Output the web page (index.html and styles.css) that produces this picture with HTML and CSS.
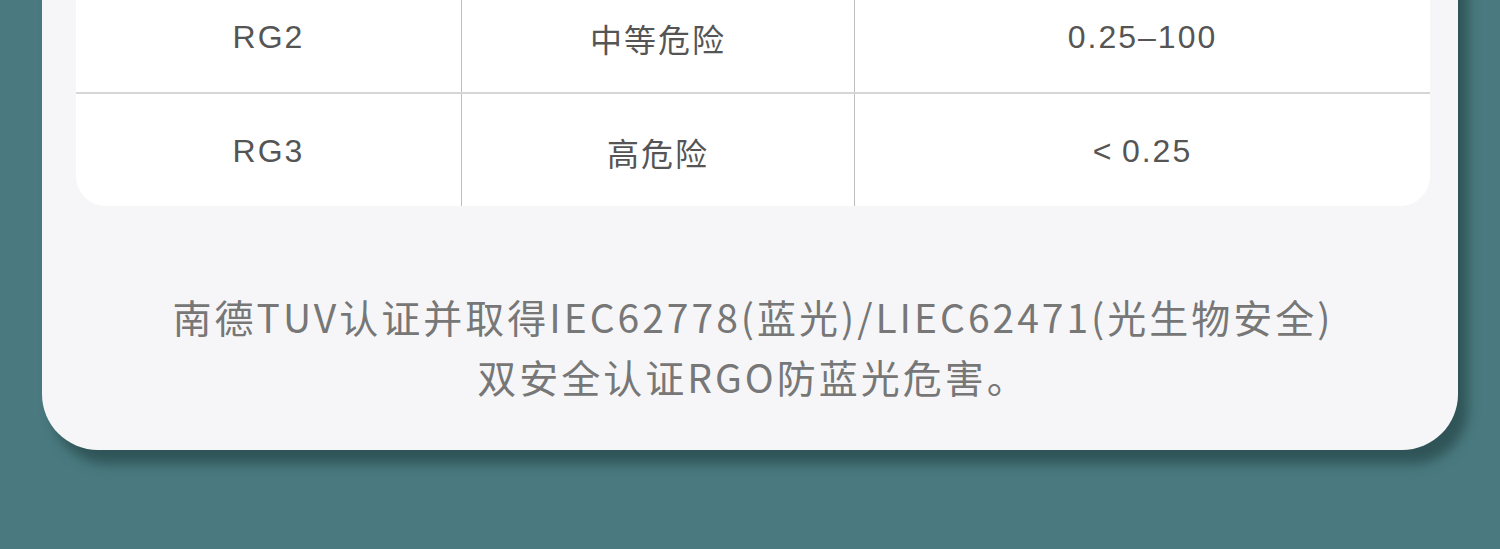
FILE: index.html
```html
<!DOCTYPE html>
<html lang="zh-CN">
<head>
  <meta charset="UTF-8" />
  <meta name="viewport" content="width=device-width, initial-scale=1.0" />
  <title>RG 危险等级</title>
  <link rel="stylesheet" href="styles.css">
</head>
<body>
  <div class="page">
    <div class="card">
      <table class="risk-table">
        <tbody>
          <tr>
            <td>RG2</td>
            <td>中等危险</td>
            <td>0.25–100</td>
          </tr>
          <tr>
            <td>RG3</td>
            <td>高危险</td>
            <td>&lt;&thinsp;0.25</td>
          </tr>
        </tbody>
      </table>

      <p class="note">
        南德TUV认证并取得IEC62778(蓝光)/LIEC62471(光生物安全)<br>
        双安全认证RGO防蓝光危害。
      </p>
    </div>
  </div>
</body>
</html>
```

FILE: styles.css
```css
html, body {
  margin: 0;
  padding: 0;
}

body {
  background: #4a7a7f;
  font-family: 'Liberation Sans', 'Noto Sans CJK SC', sans-serif;
  height: 549px;
  overflow: hidden;
}

.page {
  padding: 0 42px;
}

.card {
  margin-top: -60px;
  padding: 40px 28px 44px 34px;
  background: #f6f6f8;
  border-radius: 0 0 56px 56px;
  box-shadow: 10px 14px 12px rgba(30, 60, 62, 0.6);
}

.risk-table {
  width: 100%;
  border-collapse: collapse;
  table-layout: fixed;
  background: #ffffff;
  border-radius: 0 0 30px 30px;
}

.risk-table td {
  height: 109px;
  padding: 3px 0 0;
  text-align: center;
  vertical-align: middle;
  font-size: 32px;
  letter-spacing: 2px;
  color: #555;
  border-left: 1px solid #bdbdbd;
}

.risk-table td:first-child {
  border-left: none;
  width: 385px;
}

.risk-table td:nth-child(2) {
  width: 392px;
}

.risk-table tr + tr td {
  border-top: 2px solid #d6d6d6;
}

.note {
  margin: 80px 0 0;
  text-align: center;
  font-family: 'Noto Sans CJK SC', sans-serif;
  font-size: 39px;
  letter-spacing: 3px;
  line-height: 60px;
  color: #777;
}
```
